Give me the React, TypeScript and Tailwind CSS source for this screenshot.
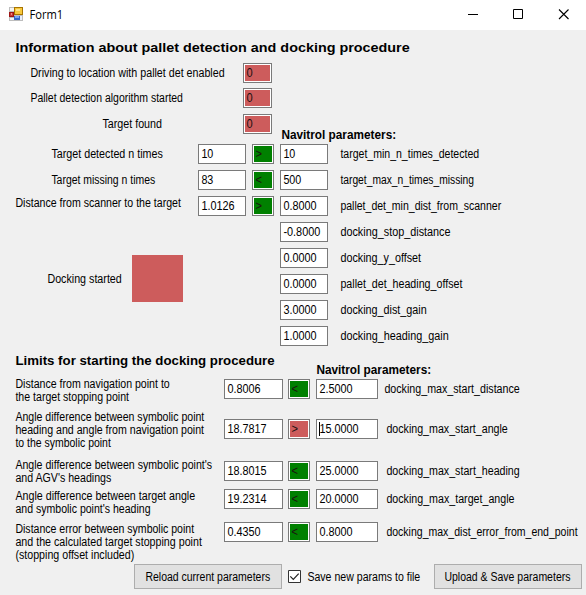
import { useLayoutEffect, useRef, useState } from "react";

type FitProps = { text: string; w: number; className?: string };

// A single line of text condensed or widened to an exact advance width.
function Fit({ text, w, className = "" }: FitProps) {
  const ref = useRef<HTMLSpanElement>(null);
  const [scale, setScale] = useState(1);
  useLayoutEffect(() => {
    if (ref.current) setScale(w / ref.current.offsetWidth);
  }, [w]);
  return (
    <span className={`block shrink-0 ${className}`} style={{ width: w }}>
      <span
        ref={ref}
        className="block w-max origin-left whitespace-pre"
        style={{ transform: `translate(0.4px, 1px) scaleX(${scale})` }}
      >
        {text}
      </span>
    </span>
  );
}

const advance = (s: string) =>
  [...s].reduce((n, c) => n + (c === "." ? 3 : c === "-" ? 3.6 : 6), 0);

function Field({ value, className, caret }: { value: string; className: string; caret?: boolean }) {
  return (
    <div className={`flex h-5 shrink-0 border border-[#7a7a7a] bg-white pt-0.5 pl-0.5 ${className}`}>
      <div className={caret ? "h-3.5 w-px bg-black" : "w-px"} />
      <Fit text={value} w={advance(value)} className="-ml-px" />
    </div>
  );
}

function Flag({ value, ok, className }: { value: string; ok?: boolean; className: string }) {
  return (
    <div className={`h-5 shrink-0 border border-[#7a7a7a] bg-white p-px ${className}`}>
      <div className={`h-full pt-px pl-px text-[#1c1010] ${ok ? "bg-[#008000]" : "bg-[#cd5c5c]"}`}>
        <Fit text={value} w={6.2} />
      </div>
    </div>
  );
}

const comparisons = [
  { label: "Target detected n times", w: 111.5, pad: "pl-[51px]", value: "10", op: ">" },
  { label: "Target missing n times", w: 103.5, pad: "pl-[51px]", value: "83", op: "<" },
  { label: "Distance from scanner to the target", w: 165.3, pad: "pl-[14.5px] -mt-[3px]", value: "1.0126", op: ">" },
];

const params = [
  { value: "10", name: "target_min_n_times_detected", w: 139 },
  { value: "500", name: "target_max_n_times_missing", w: 134 },
  { value: "0.8000", name: "pallet_det_min_dist_from_scanner", w: 160.7 },
  { value: "-0.8000", name: "docking_stop_distance", w: 110 },
  { value: "0.0000", name: "docking_y_offset", w: 81 },
  { value: "0.0000", name: "pallet_det_heading_offset", w: 122 },
  { value: "3.0000", name: "docking_dist_gain", w: 86.3 },
  { value: "1.0000", name: "docking_heading_gain", w: 108.3 },
];

type Limit = {
  lines: [string, number][];
  value: string;
  op: string;
  ok: boolean;
  limit: string;
  name: string;
  w: number;
  height: string;
  pad: string;
  gap: string;
};

const limits: Limit[] = [
  {
    lines: [["Distance from navigation point to", 154.3], ["the target stopping point", 113.5]],
    value: "0.8006", op: "<", ok: true, limit: "2.5000",
    name: "docking_max_start_distance", w: 135, height: "h-[33px]", pad: "pt-0.5", gap: "ml-1.5",
  },
  {
    lines: [
      ["Angle difference between symbolic point", 189.3],
      ["heading and angle from navigation point", 188.3],
      ["to the symbolic point", 95.5],
    ],
    value: "18.7817", op: ">", ok: false, limit: "15.0000",
    name: "docking_max_start_angle", w: 121, height: "h-12", pad: "pt-[9px]", gap: "ml-2",
  },
  {
    lines: [["Angle difference between symbolic point's", 196.5], ["and AGV's headings", 96]],
    value: "18.8015", op: "<", ok: true, limit: "25.0000",
    name: "docking_max_start_heading", w: 133, height: "h-[31px]", pad: "pt-[3px]", gap: "ml-2",
  },
  {
    lines: [["Angle difference between target angle", 179.5], ["and symbolic point's heading", 135]],
    value: "19.2314", op: "<", ok: true, limit: "20.0000",
    name: "docking_max_target_angle", w: 128, height: "h-[33px]", pad: "pt-0", gap: "ml-2",
  },
  {
    lines: [
      ["Distance error between symbolic point", 178.8],
      ["and the calculated target stopping point", 186.3],
      ["(stopping offset included)", 118.5],
    ],
    value: "0.4350", op: "<", ok: true, limit: "0.8000",
    name: "docking_max_dist_error_from_end_point", w: 191, height: "h-[42px]", pad: "pt-0", gap: "ml-2",
  },
];

function TitleBar() {
  return (
    <header className="flex h-[30px] items-start bg-white">
      <svg className="mt-[7px] ml-[9px]" width="14" height="14" viewBox="0 0 14 14" shapeRendering="crispEdges">
        <rect width="14" height="14" fill="#bdbdbd" />
        <rect x="1" y="1" width="4" height="3" fill="#f4f4f4" />
        <rect x="1" y="11" width="4" height="2" fill="#f4f4f4" />
        <rect x="11" y="9" width="2" height="4" fill="#e8eefc" />
        <rect x="5" y="0" width="9" height="8" fill="#a87400" />
        <rect x="6" y="1" width="7" height="6" fill="#f7c83c" />
        <rect x="7" y="2" width="4" height="2" fill="#ffe488" />
        <rect x="0" y="5" width="5" height="5" fill="#9d1515" />
        <rect x="1" y="6" width="3" height="3" fill="#c83838" />
        <rect x="2" y="6" width="1" height="2" fill="#f08c80" />
        <rect x="5" y="9" width="6" height="4" fill="#3567c8" />
        <rect x="6" y="9" width="4" height="2" fill="#7aa5f4" />
      </svg>
      <Fit text="Form1" w={33.5} className="mt-[6px] ml-1.5 font-['Open_Sans',sans-serif] text-[12px] leading-4" />
      <svg className="mt-[9px] mr-[17px] ml-auto" width="102" height="11" viewBox="0 0 102 11" fill="none" stroke="#000">
        <path d="M1 5.5h10" />
        <path d="M46.5.5h9v9h-9z" />
        <path d="M92 .5l9.5 9.5M101.5.5L92 10" strokeWidth="1.1" />
      </svg>
    </header>
  );
}

export default function App() {
  return (
    <div className="h-[595px] w-[586px] overflow-hidden bg-[#f0f0f0] font-['Liberation_Sans',Arial,sans-serif] text-[12.5px] leading-[13px] text-black">
      <TitleBar />
      <main>
        <h1 className="h-[33px] pt-[9px] pl-[14.5px] text-[13px] leading-4 font-bold">
          <Fit text="Information about pallet detection and docking procedure" w={394.5} />
        </h1>

        <div className="flex h-[25px]">
          <Fit text="Driving to location with pallet det enabled" w={194} className="mt-[3px] ml-[29.5px]" />
          <Flag value="0" className="ml-[19.5px] w-[29px]" />
        </div>
        <div className="flex h-[26px]">
          <Fit text="Pallet detection algorithm started" w={152.5} className="mt-[3px] ml-[29.5px]" />
          <Flag value="0" className="ml-[61px] w-[29px]" />
        </div>
        <div className="flex h-[30px]">
          <Fit text="Target found" w={60} className="mt-[3px] ml-[101.5px]" />
          <Flag value="0" className="ml-[81.5px] w-[29px]" />
          <h2 className="mt-3.5 ml-[9px] text-[12px] font-bold">
            <Fit text="Navitrol parameters:" w={115} />
          </h2>
        </div>

        <div className="flex h-[208px]">
          <div className="w-[280px]">
            {comparisons.map((c) => (
              <div key={c.label} className="flex h-[26px]">
                <div className={`w-[198px] pt-[3px] ${c.pad}`}>
                  <Fit text={c.label} w={c.w} />
                </div>
                <Field value={c.value} className="w-12" />
                <Flag value={c.op} ok className="ml-1.5 w-[22px]" />
              </div>
            ))}
            <div className="flex pt-[33px] pl-[46.5px]">
              <Fit text="Docking started" w={74.5} className="mt-[17px]" />
              <div className="ml-[11px] h-[47px] w-[51px] bg-[#cd5c5c]" />
            </div>
          </div>
          <div>
            {params.map((p) => (
              <div key={p.name} className="flex h-[26px]">
                <Field value={p.value} className="w-12" />
                <Fit text={p.name} w={p.w} className="mt-[3px] ml-3" />
              </div>
            ))}
          </div>
        </div>

        <div className="flex h-[25px]">
          <h1 className="w-[316px] pl-[14.5px] text-[13px] leading-4 font-bold">
            <Fit text="Limits for starting the docking procedure" w={259} />
          </h1>
          <h2 className="mt-[11px] text-[12px] font-bold">
            <Fit text="Navitrol parameters:" w={115} />
          </h2>
        </div>

        {limits.map((r) => (
          <div key={r.name} className={`flex ${r.height}`}>
            <div className="w-56 pl-[14.5px]">
              {r.lines.map(([t, w]) => (
                <Fit key={t} text={t} w={w} />
              ))}
            </div>
            <div className={`flex ${r.pad}`}>
              <Field value={r.value} className="w-[59px]" />
              <Flag value={r.op} ok={r.ok} className="mr-1.5 ml-[5px] w-[22px]" />
              <Field value={r.limit} className="w-[62px]" caret={!r.ok} />
              <Fit text={r.name} w={r.w} className={`mt-[3px] ${r.gap}`} />
            </div>
          </div>
        ))}

        <footer className="flex pl-[134px]">
          <button className="h-[25px] w-[148px] border border-[#adadad] bg-[#e1e1e1] pl-[10px]">
            <Fit text="Reload current parameters" w={125} />
          </button>
          <label className="ml-1.5 flex w-[146px] pt-1.5">
            <svg width="13" height="13" viewBox="0 0 13 13" fill="none">
              <path d="M.5.5h12v12H.5z" fill="#fff" stroke="#333" />
              <path d="M2.3 6.3l3 3 5.4-5.6" stroke="#222" strokeWidth="1.2" />
            </svg>
            <Fit text="Save new params to file" w={112.5} className="ml-1.5" />
          </label>
          <button className="h-[25px] w-[148px] border border-[#adadad] bg-[#e1e1e1] pl-[9px]">
            <Fit text="Upload & Save parameters" w={126} />
          </button>
        </footer>
      </main>
    </div>
  );
}
